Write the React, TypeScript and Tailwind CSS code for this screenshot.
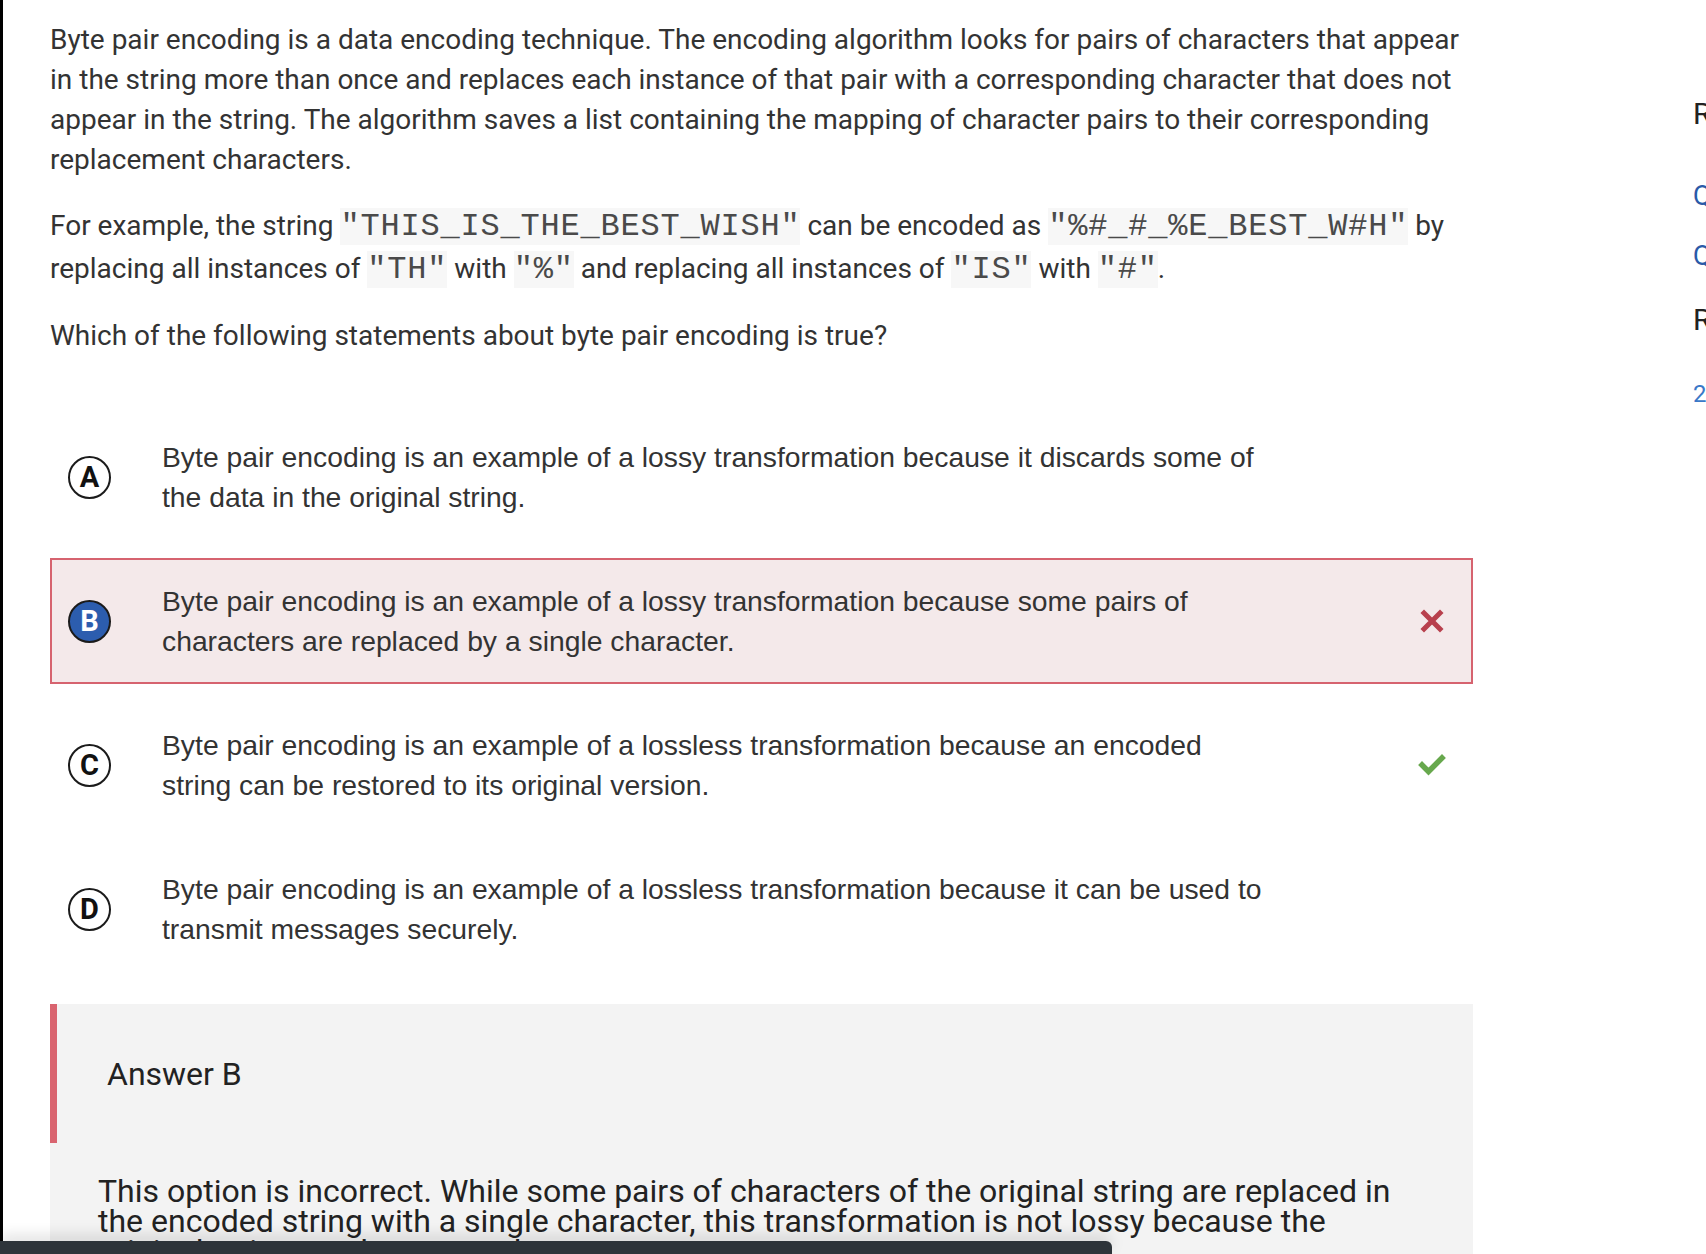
import type { ReactNode } from 'react'

interface Option {
  letter: string
  lines: string[]
  selected?: boolean
  mark?: 'wrong' | 'right'
}

const options: Option[] = [
  {
    letter: 'A',
    lines: [
      'Byte pair encoding is an example of a lossy transformation because it discards some of',
      'the data in the original string.',
    ],
  },
  {
    letter: 'B',
    lines: [
      'Byte pair encoding is an example of a lossy transformation because some pairs of',
      'characters are replaced by a single character.',
    ],
    selected: true,
    mark: 'wrong',
  },
  {
    letter: 'C',
    lines: [
      'Byte pair encoding is an example of a lossless transformation because an encoded',
      'string can be restored to its original version.',
    ],
    mark: 'right',
  },
  {
    letter: 'D',
    lines: [
      'Byte pair encoding is an example of a lossless transformation because it can be used to',
      'transmit messages securely.',
    ],
  },
]

function Code({ children }: { children: ReactNode }) {
  return (
    <span className="bg-[#f7f7f7] font-['Liberation_Mono',monospace] text-[32px] tracking-[0.8px] text-[#4a4a4a]">
      {children}
    </span>
  )
}

export default function App() {
  return (
    <div className="relative flex h-[1254px] w-[1706px] overflow-hidden bg-white font-['Roboto',sans-serif]">
      {/* window edge */}
      <div className="w-[3px] shrink-0 bg-black" />

      <main className="ml-[47px] w-[1423px] shrink-0">
        <div className="pt-[20px] text-[28px] leading-[40px] text-[#333]">
          <p className="w-[1430px]">
            Byte pair encoding is a data encoding technique. The encoding algorithm looks for pairs of characters that appear
            in the string more than once and replaces each instance of that pair with a corresponding character that does not
            appear in the string. The algorithm saves a list containing the mapping of character pairs to their corresponding
            replacement characters.
          </p>
          <p className="mt-[25px] w-[1430px] leading-[42px]">
            For example, the string <Code>"THIS_IS_THE_BEST_WISH"</Code> can be encoded as <Code>"%#_#_%E_BEST_W#H"</Code> by
            <br />
            replacing all instances of <Code>"TH"</Code> with <Code>"%"</Code> and replacing all instances of <Code>"IS"</Code> with <Code>"#"</Code>.
          </p>
          <p className="mt-[25px]">Which of the following statements about byte pair encoding is true?</p>
        </div>

        {/* choices */}
        <div className="mt-[58px] flex flex-col gap-[18px]">
          {options.map((o) => (
            <div
              key={o.letter}
              className={`flex h-[126px] items-center border-2 ${o.selected ? 'border-[#d6636f] bg-[#f4e9ea]' : 'border-transparent'}`}
            >
              <div
                className={`ml-[16px] flex h-[43px] w-[43px] shrink-0 items-center justify-center rounded-full border-2 border-[#1b1b1b] text-[29px] font-bold leading-none ${o.selected ? 'bg-[#2c5dae] text-white' : 'bg-white text-[#111]'}`}
              >
                {o.letter}
              </div>
              <p className="ml-[51px] whitespace-nowrap font-['Liberation_Sans',Arial,sans-serif] text-[28.3px] leading-[40px] text-[#333]">
                {o.lines[0]}
                <br />
                {o.lines[1]}
              </p>
              <div className="ml-auto mr-[26px] flex w-[26px] justify-center">
                {o.mark === 'wrong' && <CrossIcon />}
                {o.mark === 'right' && <CheckIcon />}
              </div>
            </div>
          ))}
        </div>

        {/* answer explanation */}
        <div className="mt-[32px] h-[400px] bg-[#f3f3f3]">
          <div className="flex h-[139px] items-center border-l-[7px] border-[#d9646f] pl-[50px] text-[32px] text-[#222]">
            Answer B
          </div>
          <p className="ml-[48px] w-[1310px] pt-[33px] text-[32px] leading-[30px] text-[#222]">
            This option is incorrect. While some pairs of characters of the original string are replaced in the encoded string
            with a single character, this transformation is not lossy because the original string can be restored.
          </p>
        </div>
      </main>

      {/* right rail, cut off by the window */}
      <aside className="ml-[220px] w-[60px] shrink-0 overflow-hidden whitespace-nowrap">
        <div className="mt-[94px] text-[30px] leading-[40px] text-[#222]">Resources</div>
        <div className="mt-[42px] text-[27px] leading-[40px] text-[#2a5aa8]">Question 1</div>
        <div className="mt-[20px] text-[27px] leading-[40px] text-[#2a5aa8]">Question 2</div>
        <div className="mt-[24px] text-[30px] leading-[40px] text-[#222]">Related</div>
        <div className="mt-[34px] text-[24px] leading-[40px] text-[#3a78c8]">2 more</div>
      </aside>

      {/* dark strip over the bottom of the page */}
      <div className="absolute bottom-0 left-0 h-[13px] w-[1112px] rounded-tr-[6px] bg-[#2e343a] shadow-[0_-6px_14px_rgba(0,0,0,0.12)]" />
    </div>
  )
}

function CrossIcon() {
  return (
    <svg width="24" height="24" viewBox="0 0 24 24" className="shrink-0">
      <path d="M4 4l16 16M20 4L4 20" stroke="#b8404d" strokeWidth={5} strokeLinecap="square" fill="none" />
    </svg>
  )
}

function CheckIcon() {
  return (
    <svg width="28" height="22" viewBox="0 0 28 22" className="shrink-0">
      <path d="M4 11l6.5 6.5L24 4" stroke="#67a84d" strokeWidth={5.5} strokeLinecap="square" fill="none" />
    </svg>
  )
}
